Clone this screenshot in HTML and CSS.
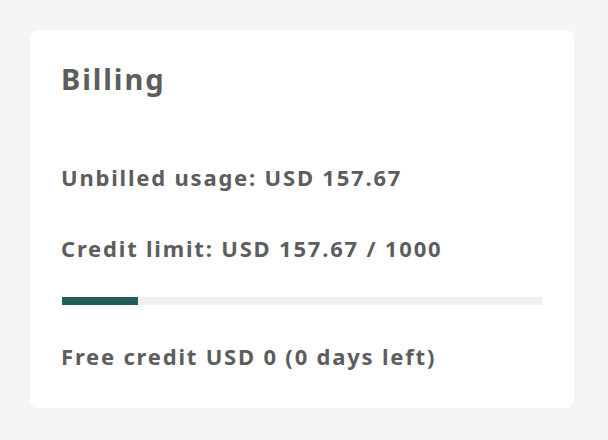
FILE: index.html
```html
<!DOCTYPE html>
<html>
<head>
<meta charset="utf-8">
<link rel="stylesheet" href="styles.css">
</head>
<body>
<div class="card">
  <h2 class="title">Billing</h2>
  <p class="line usage">Unbilled usage: USD 157.67</p>
  <p class="line limit">Credit limit: USD 157.67 / 1000</p>
  <div class="track"><div class="fill" style="width:15.767%"></div></div>
  <p class="line free">Free credit USD 0 (0 days left)</p>
</div>
</body>
</html>
```
FILE: styles.css
```css
html, body {
  margin: 0;
  padding: 0;
  background: #f5f5f7;
}
body {
  padding: 30px 34px 32px 30px;
  font-family: "Noto Sans", "Open Sans", sans-serif;
  color: #5d5d5d;
}
.card {
  box-sizing: border-box;
  width: 544px;
  height: 378px;
  background: #ffffff;
  border-radius: 8px;
  padding: 29px 32px 0 31px;
  display: flex;
  flex-direction: column;
}
.title {
  margin: 0;
  font-size: 29px;
  font-weight: 700;
  line-height: 40px;
  letter-spacing: 1.9px;
}
.line {
  margin: 0;
  font-size: 22px;
  font-weight: 700;
  line-height: 30px;
  letter-spacing: 1.8px;
  white-space: nowrap;
}
.usage { margin-top: 63px; }
.limit { margin-top: 41px; }
.track {
  margin-top: 34px;
  margin-left: 1px;
  height: 8px;
  width: 480px;
  background: #f0f0f0;
}
.fill {
  height: 100%;
  background: #235f5a;
}
.free { margin-top: 36px; }
```
